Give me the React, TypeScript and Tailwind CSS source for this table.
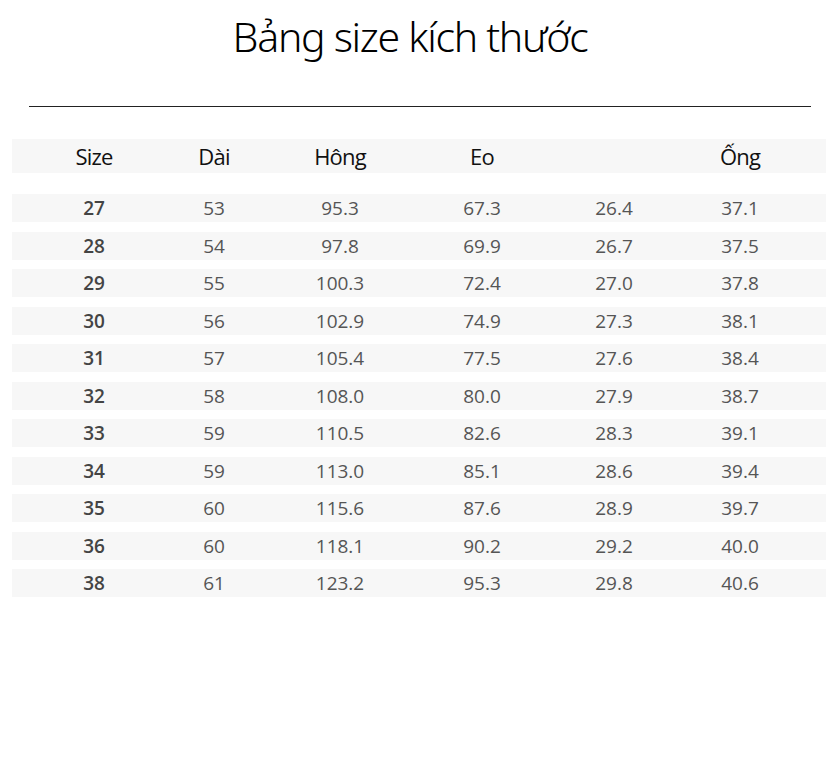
const rows = [
  ['27', '53', '95.3', '67.3', '26.4', '37.1'],
  ['28', '54', '97.8', '69.9', '26.7', '37.5'],
  ['29', '55', '100.3', '72.4', '27.0', '37.8'],
  ['30', '56', '102.9', '74.9', '27.3', '38.1'],
  ['31', '57', '105.4', '77.5', '27.6', '38.4'],
  ['32', '58', '108.0', '80.0', '27.9', '38.7'],
  ['33', '59', '110.5', '82.6', '28.3', '39.1'],
  ['34', '59', '113.0', '85.1', '28.6', '39.4'],
  ['35', '60', '115.6', '87.6', '28.9', '39.7'],
  ['36', '60', '118.1', '90.2', '29.2', '40.0'],
  ['38', '61', '123.2', '95.3', '29.8', '40.6'],
];

const headers = ['Size', 'Dài', 'Hông', 'Eo', '', 'Ống'];

const cols = 'grid grid-cols-[164px_76px_176px_108px_156px_96px] items-center';

export default function App() {
  return (
    <div className="w-[840px] h-[760px] bg-white font-['Open_Sans',sans-serif]">
      {/* Title */}
      <div className="pt-[10px] pr-[20px] h-[106px] text-center">
        <h1 className="text-[41px] leading-[52px] text-black font-light tracking-[-1.3px] font-['Noto_Sans',sans-serif]">
          Bảng size kích thước
        </h1>
      </div>
      <div className="mx-[29px] h-px bg-[#222]" />

      {/* Header */}
      <div className={`${cols} mt-[32px] mx-[12px] w-[814px] h-[34px] bg-[#f7f7f7] text-[22px] text-[#111] tracking-[-0.8px]`}>
        {headers.map((h, i) => (
          <div key={i} className="text-center leading-none">
            {h}
          </div>
        ))}
      </div>

      {/* Rows */}
      <div className="mt-[21px] mx-[12px] w-[814px] flex flex-col gap-[9.5px]">
        {rows.map((r) => (
          <div key={r[0]} className={`${cols} h-[28px] bg-[#f7f7f7] text-[19px] text-[#555]`}>
            {r.map((v, i) => (
              <div key={i} className={i === 0 ? 'text-center font-semibold text-[#444]' : 'text-center'}>
                {v}
              </div>
            ))}
          </div>
        ))}
      </div>
    </div>
  );
}
